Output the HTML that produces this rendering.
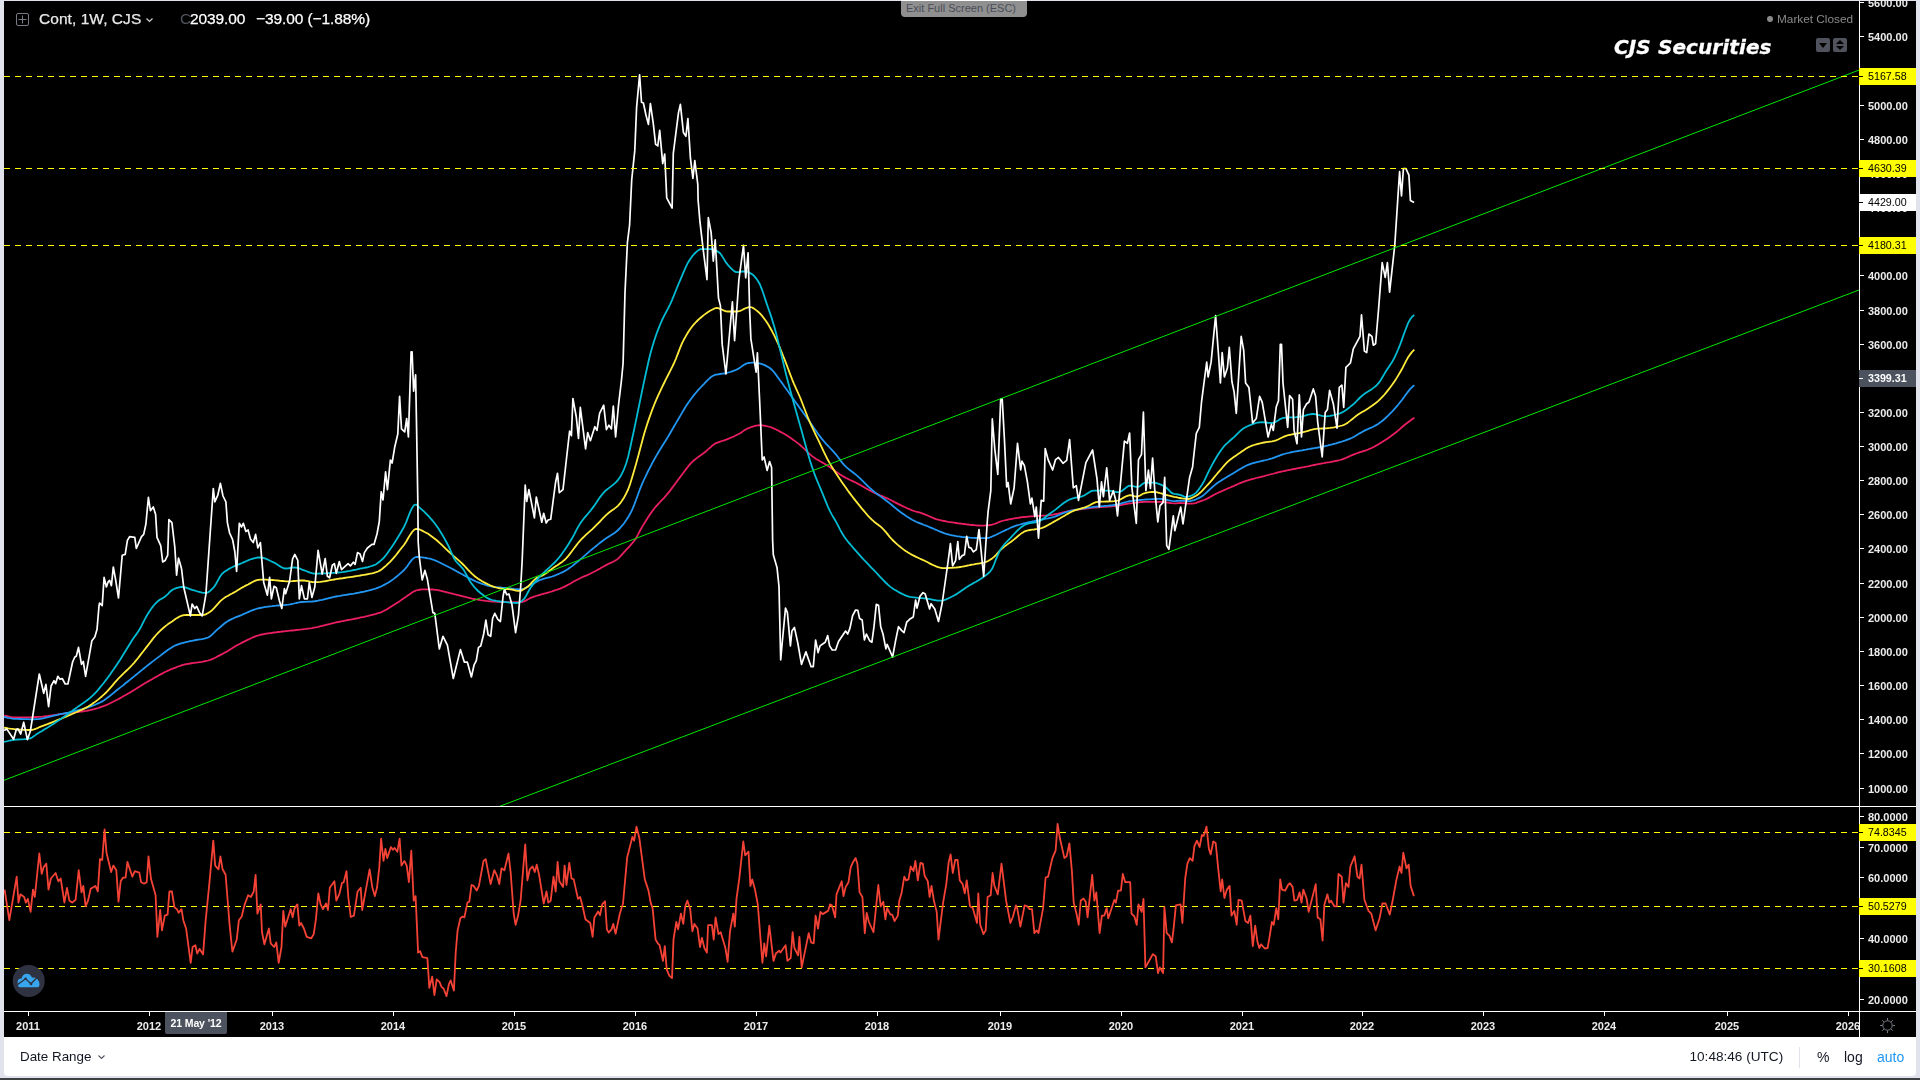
<!DOCTYPE html>
<html><head><meta charset="utf-8"><title>CJS Securities</title>
<style>
html,body{margin:0;padding:0}
body{width:1920px;height:1080px;background:#e0e3eb;position:relative;overflow:hidden;font-family:"Liberation Sans",sans-serif}
#chart{position:absolute;left:4px;top:1px;width:1912px;height:1036px;background:#000}
#bottom{position:absolute;left:4px;top:1037px;width:1912px;height:39px;background:#fff;border-radius:0 0 4px 4px}
#darkbar{position:absolute;left:0;top:1078px;width:1920px;height:2px;background:#3f4042}
svg{position:absolute;left:0;top:0}
.pl{position:absolute;left:1868px;width:48px;height:12px;line-height:12px;font-size:11px;font-weight:bold;color:#ececec;white-space:nowrap}
.tag{position:absolute;left:1859px;width:57px;height:17px;line-height:17px;font-size:10.7px;color:#000;white-space:nowrap}
.tag span{position:absolute;left:9px;top:0}
.tl{position:absolute;top:1020px;width:60px;margin-left:-30px;text-align:center;height:13px;line-height:13px;font-size:11px;font-weight:bold;color:#ececec;white-space:nowrap}
.t{position:absolute;white-space:nowrap}
</style></head><body>
<div id="chart"></div>
<div id="bottom"></div>
<div id="darkbar"></div>

<svg width="1920" height="1080" viewBox="0 0 1920 1080">
<defs><clipPath id="cm"><rect x="4" y="1" width="1855" height="805"/></clipPath><clipPath id="cr"><rect x="4" y="807" width="1855" height="204"/></clipPath></defs>
<g clip-path="url(#cm)" fill="none" stroke-linejoin="round" stroke-linecap="butt">
<polyline points="4.1,715.6 6.1,716.0 8.1,716.4 10.1,716.8 12.1,717.1 14.1,717.3 16.1,717.5 18.1,717.5 20.1,717.5 22.1,717.5 24.1,717.4 26.1,717.4 28.1,717.3 30.1,717.3 32.1,717.2 34.1,717.1 36.1,717.0 38.1,716.9 40.1,716.8 42.1,716.7 44.1,716.5 46.1,716.2 48.1,716.0 50.1,715.7 52.1,715.4 54.1,715.1 56.1,714.8 58.1,714.5 60.1,714.2 62.1,713.9 64.1,713.6 66.1,713.4 68.1,713.1 70.1,712.9 72.1,712.7 74.1,712.4 76.1,712.2 78.1,712.0 80.1,711.7 82.1,711.5 84.1,711.2 86.1,710.9 88.1,710.5 90.1,710.2 92.1,709.7 94.1,709.2 96.1,708.6 98.1,708.0 100.1,707.3 102.1,706.6 104.1,705.9 106.1,705.1 108.1,704.2 110.1,703.3 112.1,702.3 114.1,701.3 116.1,700.2 118.1,699.2 120.1,698.1 122.1,697.0 124.1,695.8 126.1,694.7 128.1,693.6 130.1,692.4 132.1,691.2 134.1,690.0 136.1,688.8 138.1,687.5 140.1,686.3 142.1,685.0 144.1,683.8 146.1,682.6 148.1,681.4 150.1,680.3 152.1,679.2 154.1,678.0 156.1,676.9 158.1,675.7 160.1,674.6 162.1,673.6 164.1,672.5 166.1,671.5 168.1,670.6 170.1,669.7 172.1,668.9 174.1,668.1 176.1,667.3 178.1,666.5 180.1,665.9 182.1,665.2 184.1,664.7 186.1,664.2 188.1,663.8 190.1,663.5 192.1,663.2 194.1,662.9 196.1,662.6 198.1,662.4 200.1,662.1 202.1,661.8 204.1,661.4 206.1,661.0 208.1,660.5 210.1,659.9 212.1,659.1 214.1,658.2 216.1,657.2 218.1,656.1 220.1,655.1 222.1,654.1 224.1,653.0 226.1,651.9 228.1,650.7 230.1,649.4 232.1,648.2 234.1,647.0 236.1,645.8 238.1,644.7 240.1,643.7 242.1,642.6 244.1,641.6 246.1,640.6 248.1,639.6 250.1,638.7 252.1,637.8 254.1,636.9 256.1,636.2 258.1,635.5 260.1,634.9 262.1,634.5 264.1,634.1 266.1,633.7 268.1,633.4 270.1,633.1 272.1,632.8 274.1,632.5 276.1,632.3 278.1,632.0 280.1,631.8 282.1,631.5 284.1,631.3 286.1,631.1 288.1,630.9 290.1,630.7 292.1,630.5 294.1,630.3 296.1,630.0 298.1,629.8 300.1,629.6 302.1,629.4 304.1,629.1 306.1,628.9 308.1,628.6 310.1,628.4 312.1,628.1 314.1,627.7 316.1,627.3 318.1,626.9 320.1,626.4 322.1,625.9 324.1,625.4 326.1,624.9 328.1,624.4 330.1,623.9 332.1,623.3 334.1,622.9 336.1,622.4 338.1,622.0 340.1,621.6 342.1,621.2 344.1,620.8 346.1,620.4 348.1,620.0 350.1,619.7 352.1,619.3 354.1,618.9 356.1,618.5 358.1,618.1 360.1,617.6 362.1,617.2 364.1,616.8 366.1,616.3 368.1,615.9 370.1,615.4 372.1,614.9 374.1,614.4 376.1,613.9 378.1,613.2 380.1,612.6 382.1,611.8 384.1,610.8 386.1,609.7 388.1,608.6 390.1,607.3 392.1,606.1 394.1,604.8 396.1,603.6 398.1,602.2 400.1,600.9 402.1,599.4 404.1,598.0 406.1,596.7 408.1,595.3 410.1,593.9 412.1,592.5 414.1,591.3 416.1,590.5 418.1,590.0 420.1,589.6 422.1,589.3 424.1,589.3 426.1,589.3 428.1,589.4 430.1,589.5 432.1,589.5 434.1,589.7 436.1,589.9 438.1,590.2 440.1,590.6 442.1,591.1 444.1,591.6 446.1,592.1 448.1,592.6 450.1,593.1 452.1,593.5 454.1,594.1 456.1,594.6 458.1,595.1 460.1,595.6 462.1,596.1 464.1,596.6 466.1,597.1 468.1,597.6 470.1,598.1 472.1,598.6 474.1,599.0 476.1,599.4 478.1,599.7 480.1,600.1 482.1,600.4 484.1,600.6 486.1,600.9 488.1,601.1 490.1,601.3 492.1,601.5 494.1,601.6 496.1,601.7 498.1,601.9 500.1,602.0 502.1,602.1 504.1,602.2 506.1,602.2 508.1,602.2 510.1,602.2 512.1,602.2 514.1,602.2 516.1,602.2 518.1,602.2 520.1,602.2 522.1,602.0 524.1,601.4 526.1,600.4 528.1,599.3 530.1,598.2 532.1,597.4 534.1,596.7 536.1,596.0 538.1,595.4 540.1,594.8 542.1,594.2 544.1,593.7 546.1,593.2 548.1,592.6 550.1,592.0 552.1,591.4 554.1,590.7 556.1,590.0 558.1,589.3 560.1,588.6 562.1,587.8 564.1,586.9 566.1,585.9 568.1,584.8 570.1,583.7 572.1,582.5 574.1,581.3 576.1,580.2 578.1,579.2 580.1,578.2 582.1,577.3 584.1,576.4 586.1,575.6 588.1,574.7 590.1,573.8 592.1,572.8 594.1,571.8 596.1,570.8 598.1,569.6 600.1,568.5 602.1,567.3 604.1,566.2 606.1,565.1 608.1,564.0 610.1,563.1 612.1,562.2 614.1,561.3 616.1,560.1 618.1,558.6 620.1,556.6 622.1,554.4 624.1,552.1 626.1,549.9 628.1,547.8 630.1,545.7 632.1,543.4 634.1,541.0 636.1,538.0 638.1,534.4 640.1,530.5 642.1,526.9 644.1,523.6 646.1,520.4 648.1,517.3 650.1,514.3 652.1,511.4 654.1,508.8 656.1,506.3 658.1,504.1 660.1,502.0 662.1,499.9 664.1,497.8 666.1,495.5 668.1,493.1 670.1,490.6 672.1,487.9 674.1,485.2 676.1,482.5 678.1,479.7 680.1,477.1 682.1,474.5 684.1,471.8 686.1,469.1 688.1,466.5 690.1,464.1 692.1,462.0 694.1,460.2 696.1,458.6 698.1,457.1 700.1,455.7 702.1,454.3 704.1,452.8 706.1,451.2 708.1,449.4 710.1,447.6 712.1,445.8 714.1,444.3 716.1,443.1 718.1,442.3 720.1,441.6 722.1,441.0 724.1,440.4 726.1,439.7 728.1,438.9 730.1,438.0 732.1,437.2 734.1,436.3 736.1,435.3 738.1,434.3 740.1,433.2 742.1,431.9 744.1,430.4 746.1,429.2 748.1,428.3 750.1,427.5 752.1,426.8 754.1,426.1 756.1,425.6 758.1,425.3 760.1,425.2 762.1,425.3 764.1,425.6 766.1,426.0 768.1,426.5 770.1,427.0 772.1,427.7 774.1,428.6 776.1,429.5 778.1,430.5 780.1,431.6 782.1,432.7 784.1,433.8 786.1,435.0 788.1,436.3 790.1,437.6 792.1,439.0 794.1,440.4 796.1,441.9 798.1,443.4 800.1,445.0 802.1,446.8 804.1,448.7 806.1,450.6 808.1,452.6 810.1,454.4 812.1,456.1 814.1,457.6 816.1,458.9 818.1,460.1 820.1,461.3 822.1,462.4 824.1,463.5 826.1,464.7 828.1,465.9 830.1,467.2 832.1,468.7 834.1,470.1 836.1,471.6 838.1,473.1 840.1,474.5 842.1,475.8 844.1,476.9 846.1,478.0 848.1,479.0 850.1,480.0 852.1,480.9 854.1,481.9 856.1,482.8 858.1,483.9 860.1,484.9 862.1,486.1 864.1,487.2 866.1,488.4 868.1,489.5 870.1,490.6 872.1,491.7 874.1,492.6 876.1,493.5 878.1,494.4 880.1,495.3 882.1,496.1 884.1,497.0 886.1,497.9 888.1,498.8 890.1,499.8 892.1,500.8 894.1,501.9 896.1,502.9 898.1,503.9 900.1,504.9 902.1,505.9 904.1,506.8 906.1,507.7 908.1,508.7 910.1,509.5 912.1,510.3 914.1,511.0 916.1,511.6 918.1,512.1 920.1,512.6 922.1,513.3 924.1,514.1 926.1,514.9 928.1,515.8 930.1,516.7 932.1,517.5 934.1,518.3 936.1,519.1 938.1,519.7 940.1,520.2 942.1,520.6 944.1,521.0 946.1,521.4 948.1,521.8 950.1,522.1 952.1,522.4 954.1,522.7 956.1,523.0 958.1,523.3 960.1,523.5 962.1,523.8 964.1,524.0 966.1,524.3 968.1,524.5 970.1,524.8 972.1,525.0 974.1,525.2 976.1,525.4 978.1,525.5 980.1,525.6 982.1,525.6 984.1,525.6 986.1,525.4 988.1,525.3 990.1,525.0 992.1,524.6 994.1,524.0 996.1,523.3 998.1,522.5 1000.1,521.7 1002.1,521.0 1004.1,520.5 1006.1,520.0 1008.1,519.6 1010.1,519.2 1012.1,518.8 1014.1,518.4 1016.1,518.1 1018.1,517.8 1020.1,517.5 1022.1,517.2 1024.1,517.0 1026.1,516.8 1028.1,516.6 1030.1,516.4 1032.1,516.3 1034.1,516.2 1036.1,516.1 1038.1,515.9 1040.1,515.8 1042.1,515.7 1044.1,515.6 1046.1,515.5 1048.1,515.3 1050.1,515.1 1052.1,514.8 1054.1,514.4 1056.1,514.0 1058.1,513.6 1060.1,513.1 1062.1,512.6 1064.1,512.1 1066.1,511.7 1068.1,511.2 1070.1,510.9 1072.1,510.5 1074.1,510.2 1076.1,509.9 1078.1,509.7 1080.1,509.4 1082.1,509.1 1084.1,508.9 1086.1,508.6 1088.1,508.4 1090.1,508.1 1092.1,507.9 1094.1,507.7 1096.1,507.5 1098.1,507.4 1100.1,507.2 1102.1,507.1 1104.1,506.9 1106.1,506.8 1108.1,506.6 1110.1,506.5 1112.1,506.3 1114.1,506.1 1116.1,505.8 1118.1,505.5 1120.1,505.2 1122.1,504.8 1124.1,504.4 1126.1,504.0 1128.1,503.6 1130.1,503.3 1132.1,503.1 1134.1,502.8 1136.1,502.6 1138.1,502.3 1140.1,502.1 1142.1,502.0 1144.1,501.9 1146.1,501.9 1148.1,501.9 1150.1,501.9 1152.1,501.9 1154.1,501.9 1156.1,501.9 1158.1,501.9 1160.1,501.9 1162.1,502.0 1164.1,502.2 1166.1,502.4 1168.1,502.7 1170.1,503.0 1172.1,503.2 1174.1,503.3 1176.1,503.3 1178.1,503.1 1180.1,503.0 1182.1,503.1 1184.1,503.2 1186.1,503.4 1188.1,503.6 1190.1,503.7 1192.1,503.6 1194.1,503.3 1196.1,502.8 1198.1,502.1 1200.1,501.4 1202.1,500.7 1204.1,500.0 1206.1,499.1 1208.1,498.1 1210.1,497.0 1212.1,495.9 1214.1,494.8 1216.1,493.7 1218.1,492.8 1220.1,491.9 1222.1,491.0 1224.1,490.1 1226.1,489.2 1228.1,488.3 1230.1,487.5 1232.1,486.6 1234.1,485.8 1236.1,484.9 1238.1,484.0 1240.1,483.2 1242.1,482.4 1244.1,481.6 1246.1,480.9 1248.1,480.3 1250.1,479.7 1252.1,479.1 1254.1,478.6 1256.1,478.0 1258.1,477.5 1260.1,477.1 1262.1,476.6 1264.1,476.1 1266.1,475.5 1268.1,475.0 1270.1,474.5 1272.1,474.0 1274.1,473.5 1276.1,472.9 1278.1,472.4 1280.1,471.9 1282.1,471.5 1284.1,471.0 1286.1,470.6 1288.1,470.2 1290.1,469.8 1292.1,469.4 1294.1,469.0 1296.1,468.6 1298.1,468.2 1300.1,467.8 1302.1,467.4 1304.1,467.1 1306.1,466.7 1308.1,466.3 1310.1,465.8 1312.1,465.4 1314.1,465.0 1316.1,464.6 1318.1,464.2 1320.1,463.8 1322.1,463.4 1324.1,463.1 1326.1,462.7 1328.1,462.4 1330.1,462.1 1332.1,461.7 1334.1,461.3 1336.1,460.9 1338.1,460.5 1340.1,460.0 1342.1,459.4 1344.1,458.6 1346.1,457.8 1348.1,456.9 1350.1,456.0 1352.1,455.1 1354.1,454.3 1356.1,453.5 1358.1,452.9 1360.1,452.2 1362.1,451.6 1364.1,450.9 1366.1,450.3 1368.1,449.5 1370.1,448.7 1372.1,447.8 1374.1,446.7 1376.1,445.6 1378.1,444.5 1380.1,443.3 1382.1,442.1 1384.1,440.8 1386.1,439.5 1388.1,438.2 1390.1,436.8 1392.1,435.3 1394.1,433.8 1396.1,432.3 1398.1,430.6 1400.1,428.8 1402.1,427.0 1404.1,425.3 1406.1,423.7 1408.1,422.2 1410.1,420.7 1412.1,419.3 1414.1,418.0 1414.4,417.8" stroke="#e91e63" stroke-width="1.8"/>
<polyline points="4.1,717.0 6.1,717.4 8.1,717.9 10.1,718.2 12.1,718.6 14.1,718.8 16.1,718.9 18.1,718.9 20.1,719.0 22.1,719.1 24.1,719.2 26.1,719.2 28.1,719.2 30.1,719.3 32.1,719.3 34.1,719.3 36.1,719.2 38.1,719.1 40.1,718.8 42.1,718.5 44.1,718.1 46.1,717.6 48.1,717.2 50.1,716.7 52.1,716.1 54.1,715.6 56.1,715.1 58.1,714.7 60.1,714.2 62.1,713.8 64.1,713.4 66.1,713.0 68.1,712.6 70.1,712.1 72.1,711.7 74.1,711.2 76.1,710.7 78.1,710.2 80.1,709.7 82.1,709.2 84.1,708.6 86.1,708.0 88.1,707.3 90.1,706.6 92.1,705.9 94.1,705.2 96.1,704.3 98.1,703.4 100.1,702.5 102.1,701.4 104.1,700.2 106.1,698.8 108.1,697.3 110.1,695.8 112.1,694.1 114.1,692.5 116.1,690.8 118.1,689.2 120.1,687.6 122.1,686.1 124.1,684.5 126.1,682.8 128.1,681.2 130.1,679.6 132.1,678.0 134.1,676.4 136.1,674.7 138.1,673.1 140.1,671.5 142.1,669.9 144.1,668.2 146.1,666.6 148.1,665.0 150.1,663.5 152.1,661.9 154.1,660.4 156.1,658.9 158.1,657.4 160.1,655.9 162.1,654.3 164.1,652.8 166.1,651.3 168.1,649.8 170.1,648.4 172.1,647.2 174.1,646.0 176.1,645.1 178.1,644.3 180.1,643.6 182.1,643.1 184.1,642.6 186.1,642.1 188.1,641.7 190.1,641.2 192.1,640.8 194.1,640.4 196.1,640.0 198.1,639.7 200.1,639.4 202.1,639.1 204.1,638.7 206.1,638.2 208.1,637.5 210.1,636.3 212.1,634.6 214.1,632.7 216.1,630.7 218.1,628.9 220.1,627.2 222.1,625.5 224.1,623.8 226.1,622.2 228.1,620.9 230.1,619.9 232.1,618.9 234.1,618.0 236.1,617.2 238.1,616.4 240.1,615.6 242.1,614.8 244.1,613.9 246.1,613.0 248.1,612.1 250.1,611.2 252.1,610.4 254.1,609.6 256.1,609.0 258.1,608.4 260.1,608.0 262.1,607.6 264.1,607.2 266.1,606.9 268.1,606.6 270.1,606.3 272.1,606.1 274.1,605.8 276.1,605.7 278.1,605.5 280.1,605.4 282.1,605.3 284.1,605.1 286.1,604.9 288.1,604.7 290.1,604.4 292.1,604.0 294.1,603.5 296.1,603.0 298.1,602.6 300.1,602.2 302.1,602.0 304.1,601.9 306.1,601.8 308.1,601.7 310.1,601.6 312.1,601.5 314.1,601.3 316.1,601.0 318.1,600.7 320.1,600.2 322.1,599.8 324.1,599.3 326.1,598.8 328.1,598.3 330.1,597.8 332.1,597.3 334.1,596.9 336.1,596.5 338.1,596.1 340.1,595.8 342.1,595.4 344.1,595.1 346.1,594.8 348.1,594.5 350.1,594.2 352.1,593.9 354.1,593.6 356.1,593.2 358.1,592.8 360.1,592.4 362.1,592.0 364.1,591.6 366.1,591.1 368.1,590.7 370.1,590.2 372.1,589.6 374.1,589.0 376.1,588.4 378.1,587.7 380.1,586.9 382.1,586.0 384.1,584.9 386.1,583.8 388.1,582.7 390.1,581.4 392.1,580.1 394.1,578.6 396.1,577.0 398.1,575.4 400.1,573.6 402.1,571.9 404.1,570.0 406.1,567.7 408.1,564.9 410.1,562.1 412.1,559.6 414.1,557.8 416.1,557.0 418.1,557.0 420.1,557.2 422.1,557.4 424.1,557.7 426.1,558.0 428.1,558.4 430.1,558.7 432.1,559.3 434.1,560.0 436.1,560.8 438.1,561.7 440.1,562.7 442.1,563.7 444.1,564.7 446.1,565.7 448.1,566.7 450.1,567.7 452.1,568.8 454.1,569.9 456.1,571.0 458.1,572.1 460.1,573.2 462.1,574.3 464.1,575.4 466.1,576.5 468.1,577.5 470.1,578.6 472.1,579.6 474.1,580.6 476.1,581.5 478.1,582.3 480.1,583.1 482.1,583.8 484.1,584.5 486.1,585.2 488.1,585.8 490.1,586.2 492.1,586.6 494.1,586.9 496.1,587.1 498.1,587.3 500.1,587.5 502.1,587.7 504.1,587.8 506.1,588.0 508.1,588.2 510.1,588.4 512.1,588.6 514.1,588.9 516.1,589.1 518.1,589.2 520.1,589.3 522.1,589.2 524.1,588.5 526.1,587.6 528.1,586.4 530.1,585.3 532.1,584.3 534.1,583.2 536.1,582.0 538.1,580.9 540.1,580.0 542.1,579.3 544.1,578.7 546.1,578.1 548.1,577.6 550.1,577.1 552.1,576.5 554.1,575.8 556.1,575.0 558.1,574.2 560.1,573.3 562.1,572.4 564.1,571.4 566.1,570.3 568.1,569.0 570.1,567.6 572.1,566.1 574.1,564.5 576.1,562.9 578.1,561.3 580.1,559.6 582.1,557.9 584.1,556.1 586.1,554.4 588.1,552.6 590.1,550.9 592.1,549.3 594.1,547.6 596.1,546.0 598.1,544.4 600.1,542.8 602.1,541.2 604.1,539.7 606.1,538.3 608.1,537.0 610.1,535.8 612.1,534.5 614.1,533.2 616.1,531.7 618.1,530.0 620.1,528.0 622.1,525.7 624.1,523.2 626.1,520.3 628.1,517.2 630.1,513.8 632.1,509.9 634.1,505.1 636.1,499.7 638.1,494.2 640.1,488.8 642.1,483.9 644.1,479.5 646.1,475.3 648.1,471.2 650.1,467.3 652.1,463.4 654.1,459.7 656.1,456.1 658.1,452.7 660.1,449.4 662.1,446.3 664.1,443.1 666.1,439.9 668.1,436.6 670.1,433.2 672.1,429.8 674.1,426.3 676.1,422.9 678.1,419.5 680.1,416.1 682.1,412.6 684.1,409.2 686.1,406.0 688.1,403.0 690.1,400.2 692.1,397.5 694.1,394.9 696.1,392.5 698.1,390.2 700.1,388.0 702.1,385.9 704.1,383.8 706.1,381.6 708.1,379.6 710.1,377.8 712.1,376.3 714.1,375.2 716.1,374.7 718.1,374.3 720.1,374.0 722.1,373.7 724.1,373.5 726.1,373.1 728.1,372.5 730.1,372.0 732.1,371.3 734.1,370.6 736.1,369.8 738.1,368.9 740.1,367.6 742.1,366.1 744.1,364.7 746.1,363.6 748.1,363.0 750.1,362.8 752.1,362.6 754.1,362.6 756.1,362.8 758.1,363.2 760.1,363.6 762.1,364.2 764.1,364.9 766.1,365.9 768.1,367.0 770.1,368.3 772.1,370.0 774.1,372.2 776.1,374.9 778.1,377.7 780.1,380.5 782.1,383.1 784.1,385.9 786.1,388.7 788.1,391.6 790.1,394.5 792.1,397.3 794.1,400.1 796.1,402.9 798.1,405.6 800.1,408.4 802.1,411.1 804.1,413.9 806.1,416.7 808.1,419.5 810.1,422.3 812.1,425.3 814.1,428.2 816.1,431.1 818.1,433.9 820.1,436.6 822.1,439.2 824.1,441.5 826.1,443.8 828.1,445.9 830.1,448.0 832.1,450.1 834.1,452.3 836.1,454.6 838.1,457.2 840.1,459.9 842.1,462.6 844.1,464.9 846.1,466.8 848.1,468.6 850.1,470.2 852.1,471.7 854.1,473.3 856.1,474.9 858.1,476.6 860.1,478.4 862.1,480.4 864.1,482.3 866.1,484.3 868.1,486.3 870.1,488.2 872.1,490.0 874.1,491.6 876.1,493.2 878.1,494.7 880.1,496.1 882.1,497.6 884.1,499.0 886.1,500.5 888.1,502.0 890.1,503.6 892.1,505.3 894.1,507.0 896.1,508.6 898.1,510.2 900.1,511.8 902.1,513.2 904.1,514.6 906.1,516.0 908.1,517.3 910.1,518.5 912.1,519.7 914.1,520.7 916.1,521.7 918.1,522.6 920.1,523.4 922.1,524.2 924.1,525.0 926.1,525.7 928.1,526.5 930.1,527.3 932.1,528.1 934.1,529.0 936.1,529.8 938.1,530.7 940.1,531.6 942.1,532.4 944.1,533.2 946.1,533.9 948.1,534.4 950.1,534.9 952.1,535.3 954.1,535.7 956.1,536.1 958.1,536.4 960.1,536.7 962.1,537.0 964.1,537.2 966.1,537.4 968.1,537.5 970.1,537.7 972.1,537.8 974.1,537.9 976.1,538.0 978.1,538.0 980.1,538.1 982.1,538.1 984.1,538.2 986.1,538.2 988.1,538.0 990.1,537.4 992.1,536.5 994.1,535.6 996.1,534.7 998.1,533.7 1000.1,532.8 1002.1,531.8 1004.1,530.9 1006.1,529.9 1008.1,529.0 1010.1,528.0 1012.1,527.2 1014.1,526.4 1016.1,525.7 1018.1,525.0 1020.1,524.5 1022.1,523.9 1024.1,523.4 1026.1,522.9 1028.1,522.4 1030.1,522.0 1032.1,521.5 1034.1,521.1 1036.1,520.6 1038.1,520.2 1040.1,519.9 1042.1,519.5 1044.1,519.1 1046.1,518.7 1048.1,518.3 1050.1,517.8 1052.1,517.3 1054.1,516.8 1056.1,516.1 1058.1,515.3 1060.1,514.5 1062.1,513.7 1064.1,512.9 1066.1,512.2 1068.1,511.5 1070.1,510.9 1072.1,510.5 1074.1,510.0 1076.1,509.6 1078.1,509.3 1080.1,508.9 1082.1,508.6 1084.1,508.3 1086.1,508.0 1088.1,507.7 1090.1,507.4 1092.1,507.2 1094.1,506.9 1096.1,506.7 1098.1,506.5 1100.1,506.3 1102.1,506.1 1104.1,506.0 1106.1,505.8 1108.1,505.7 1110.1,505.5 1112.1,505.3 1114.1,505.0 1116.1,504.7 1118.1,504.3 1120.1,503.8 1122.1,503.2 1124.1,502.6 1126.1,502.0 1128.1,501.5 1130.1,501.1 1132.1,500.9 1134.1,500.6 1136.1,500.4 1138.1,500.2 1140.1,500.0 1142.1,499.8 1144.1,499.7 1146.1,499.5 1148.1,499.4 1150.1,499.3 1152.1,499.2 1154.1,499.1 1156.1,499.0 1158.1,498.9 1160.1,498.9 1162.1,499.0 1164.1,499.3 1166.1,499.7 1168.1,500.2 1170.1,500.6 1172.1,500.9 1174.1,501.1 1176.1,501.0 1178.1,500.8 1180.1,500.7 1182.1,500.8 1184.1,500.9 1186.1,501.1 1188.1,501.2 1190.1,501.1 1192.1,500.7 1194.1,500.1 1196.1,499.3 1198.1,498.4 1200.1,497.4 1202.1,496.2 1204.1,494.6 1206.1,492.9 1208.1,491.0 1210.1,489.1 1212.1,487.3 1214.1,485.6 1216.1,484.0 1218.1,482.6 1220.1,481.3 1222.1,480.0 1224.1,478.7 1226.1,477.5 1228.1,476.2 1230.1,475.1 1232.1,473.9 1234.1,472.7 1236.1,471.5 1238.1,470.3 1240.1,469.1 1242.1,467.9 1244.1,466.8 1246.1,465.8 1248.1,464.9 1250.1,464.1 1252.1,463.4 1254.1,462.8 1256.1,462.3 1258.1,461.8 1260.1,461.4 1262.1,460.9 1264.1,460.5 1266.1,460.0 1268.1,459.5 1270.1,458.9 1272.1,458.3 1274.1,457.6 1276.1,456.8 1278.1,456.1 1280.1,455.4 1282.1,454.7 1284.1,454.0 1286.1,453.5 1288.1,453.0 1290.1,452.5 1292.1,452.1 1294.1,451.7 1296.1,451.3 1298.1,451.0 1300.1,450.6 1302.1,450.3 1304.1,449.9 1306.1,449.6 1308.1,449.2 1310.1,448.9 1312.1,448.5 1314.1,448.2 1316.1,447.8 1318.1,447.5 1320.1,447.1 1322.1,446.7 1324.1,446.3 1326.1,445.8 1328.1,445.4 1330.1,444.9 1332.1,444.4 1334.1,443.8 1336.1,443.3 1338.1,442.7 1340.1,442.1 1342.1,441.5 1344.1,440.8 1346.1,440.2 1348.1,439.4 1350.1,438.6 1352.1,437.7 1354.1,436.7 1356.1,435.5 1358.1,434.3 1360.1,433.1 1362.1,432.0 1364.1,430.9 1366.1,429.9 1368.1,429.0 1370.1,428.1 1372.1,427.2 1374.1,426.2 1376.1,425.1 1378.1,424.0 1380.1,422.6 1382.1,421.0 1384.1,419.3 1386.1,417.5 1388.1,415.6 1390.1,413.6 1392.1,411.6 1394.1,409.4 1396.1,407.1 1398.1,404.8 1400.1,402.3 1402.1,399.8 1404.1,397.1 1406.1,394.2 1408.1,391.6 1410.1,389.2 1412.1,387.1 1414.1,385.3 1414.3,385.1" stroke="#2196f3" stroke-width="1.8"/>
<polyline points="4.1,727.7 6.1,728.0 8.1,728.4 10.1,728.7 12.1,728.9 14.1,729.1 16.1,729.3 18.1,729.5 20.1,729.6 22.1,729.7 24.1,729.9 26.1,729.9 28.1,730.0 30.1,730.0 32.1,729.8 34.1,729.3 36.1,728.6 38.1,727.8 40.1,726.9 42.1,726.1 44.1,725.3 46.1,724.6 48.1,723.9 50.1,723.1 52.1,722.3 54.1,721.5 56.1,720.7 58.1,719.9 60.1,719.1 62.1,718.3 64.1,717.4 66.1,716.6 68.1,715.7 70.1,714.9 72.1,714.0 74.1,713.2 76.1,712.3 78.1,711.4 80.1,710.5 82.1,709.6 84.1,708.6 86.1,707.6 88.1,706.5 90.1,705.3 92.1,704.0 94.1,702.6 96.1,701.1 98.1,699.6 100.1,697.9 102.1,696.2 104.1,694.4 106.1,692.5 108.1,690.3 110.1,688.1 112.1,685.8 114.1,683.4 116.1,681.1 118.1,678.9 120.1,676.9 122.1,674.9 124.1,672.9 126.1,671.0 128.1,669.1 130.1,667.1 132.1,665.0 134.1,662.8 136.1,660.4 138.1,658.0 140.1,655.4 142.1,652.8 144.1,650.2 146.1,647.6 148.1,645.1 150.1,642.5 152.1,639.9 154.1,637.3 156.1,635.0 158.1,632.9 160.1,630.9 162.1,629.0 164.1,627.3 166.1,625.6 168.1,624.1 170.1,622.7 172.1,621.4 174.1,620.0 176.1,618.6 178.1,617.4 180.1,616.3 182.1,615.5 184.1,615.1 186.1,615.0 188.1,615.0 190.1,615.0 192.1,615.0 194.1,615.0 196.1,615.0 198.1,615.0 200.1,615.0 202.1,615.0 204.1,614.9 206.1,614.1 208.1,613.0 210.1,611.7 212.1,610.2 214.1,608.2 216.1,605.9 218.1,603.6 220.1,601.4 222.1,599.6 224.1,598.1 226.1,596.8 228.1,595.7 230.1,594.5 232.1,593.5 234.1,592.4 236.1,591.2 238.1,590.0 240.1,588.8 242.1,587.6 244.1,586.5 246.1,585.4 248.1,584.5 250.1,583.4 252.1,582.3 254.1,581.2 256.1,580.4 258.1,579.8 260.1,579.6 262.1,579.6 264.1,579.7 266.1,579.7 268.1,579.8 270.1,579.9 272.1,580.0 274.1,580.1 276.1,580.3 278.1,580.5 280.1,580.8 282.1,581.0 284.1,581.2 286.1,581.4 288.1,581.4 290.1,581.3 292.1,581.2 294.1,581.0 296.1,580.8 298.1,580.6 300.1,580.5 302.1,580.4 304.1,580.5 306.1,580.8 308.1,581.2 310.1,581.6 312.1,582.0 314.1,582.2 316.1,582.2 318.1,582.1 320.1,581.9 322.1,581.6 324.1,581.3 326.1,581.0 328.1,580.6 330.1,580.2 332.1,579.8 334.1,579.5 336.1,579.1 338.1,578.8 340.1,578.5 342.1,578.3 344.1,578.0 346.1,577.7 348.1,577.4 350.1,577.1 352.1,576.8 354.1,576.5 356.1,576.1 358.1,575.8 360.1,575.5 362.1,575.1 364.1,574.8 366.1,574.5 368.1,574.1 370.1,573.7 372.1,573.3 374.1,572.8 376.1,572.2 378.1,571.5 380.1,570.4 382.1,569.0 384.1,567.3 386.1,565.6 388.1,563.7 390.1,561.9 392.1,559.7 394.1,557.4 396.1,555.0 398.1,552.4 400.1,549.8 402.1,547.2 404.1,544.7 406.1,541.7 408.1,538.3 410.1,534.9 412.1,532.0 414.1,529.8 416.1,528.9 418.1,529.1 420.1,529.7 422.1,530.6 424.1,531.7 426.1,532.7 428.1,533.8 430.1,535.2 432.1,536.7 434.1,538.2 436.1,539.8 438.1,541.5 440.1,543.3 442.1,545.2 444.1,547.2 446.1,549.1 448.1,551.0 450.1,552.8 452.1,554.6 454.1,556.4 456.1,558.1 458.1,559.9 460.1,561.7 462.1,563.5 464.1,565.5 466.1,567.6 468.1,569.8 470.1,571.9 472.1,573.9 474.1,575.7 476.1,577.3 478.1,578.7 480.1,580.0 482.1,581.3 484.1,582.4 486.1,583.4 488.1,584.4 490.1,585.3 492.1,586.1 494.1,586.9 496.1,587.5 498.1,588.0 500.1,588.4 502.1,588.6 504.1,588.8 506.1,589.0 508.1,589.2 510.1,589.4 512.1,589.6 514.1,590.1 516.1,590.6 518.1,590.9 520.1,590.9 522.1,590.3 524.1,589.1 526.1,587.8 528.1,586.4 530.1,584.4 532.1,582.2 534.1,580.1 536.1,578.4 538.1,577.3 540.1,576.5 542.1,575.7 544.1,574.5 546.1,573.2 548.1,571.8 550.1,570.3 552.1,568.8 554.1,567.3 556.1,566.0 558.1,564.7 560.1,563.3 562.1,561.9 564.1,560.3 566.1,558.4 568.1,556.1 570.1,553.6 572.1,551.0 574.1,548.3 576.1,545.6 578.1,543.0 580.1,540.7 582.1,538.5 584.1,536.6 586.1,534.7 588.1,532.9 590.1,531.1 592.1,529.3 594.1,527.4 596.1,525.4 598.1,523.4 600.1,521.3 602.1,519.2 604.1,517.1 606.1,515.1 608.1,513.3 610.1,511.7 612.1,510.3 614.1,508.9 616.1,507.4 618.1,505.6 620.1,503.4 622.1,500.6 624.1,497.4 626.1,493.7 628.1,489.5 630.1,484.1 632.1,477.6 634.1,470.7 636.1,463.7 638.1,456.6 640.1,449.0 642.1,441.4 644.1,434.1 646.1,427.5 648.1,421.4 650.1,415.6 652.1,410.1 654.1,405.0 656.1,400.1 658.1,395.6 660.1,391.3 662.1,387.1 664.1,383.0 666.1,378.9 668.1,375.0 670.1,371.1 672.1,367.2 674.1,363.0 676.1,358.3 678.1,353.1 680.1,347.9 682.1,343.2 684.1,339.2 686.1,335.6 688.1,332.2 690.1,329.2 692.1,326.5 694.1,324.1 696.1,322.0 698.1,320.0 700.1,318.2 702.1,316.5 704.1,314.9 706.1,313.4 708.1,312.0 710.1,310.7 712.1,309.7 714.1,308.7 716.1,308.0 718.1,308.2 720.1,308.8 722.1,309.7 724.1,310.6 726.1,311.3 728.1,311.5 730.1,311.5 732.1,311.5 734.1,311.5 736.1,311.5 738.1,311.4 740.1,310.9 742.1,310.0 744.1,308.9 746.1,308.0 748.1,307.3 750.1,307.0 752.1,307.5 754.1,308.6 756.1,310.1 758.1,311.7 760.1,313.6 762.1,315.9 764.1,318.5 766.1,321.3 768.1,324.3 770.1,327.7 772.1,331.3 774.1,335.2 776.1,339.3 778.1,343.7 780.1,348.4 782.1,353.3 784.1,358.3 786.1,363.4 788.1,368.7 790.1,374.1 792.1,379.3 794.1,384.1 796.1,388.6 798.1,393.0 800.1,397.5 802.1,402.5 804.1,407.7 806.1,413.0 808.1,418.1 810.1,422.8 812.1,427.2 814.1,431.4 816.1,435.6 818.1,439.7 820.1,443.9 822.1,448.1 824.1,452.3 826.1,456.4 828.1,460.3 830.1,463.9 832.1,467.2 834.1,470.4 836.1,473.5 838.1,476.5 840.1,479.4 842.1,482.4 844.1,485.3 846.1,488.1 848.1,490.9 850.1,493.6 852.1,496.3 854.1,498.9 856.1,501.4 858.1,503.9 860.1,506.4 862.1,508.8 864.1,511.1 866.1,513.5 868.1,515.8 870.1,517.9 872.1,519.9 874.1,521.7 876.1,523.2 878.1,524.7 880.1,526.2 882.1,528.0 884.1,530.1 886.1,532.4 888.1,534.9 890.1,537.3 892.1,539.5 894.1,541.5 896.1,543.3 898.1,545.1 900.1,546.8 902.1,548.4 904.1,549.9 906.1,551.3 908.1,552.6 910.1,553.8 912.1,554.9 914.1,555.9 916.1,556.9 918.1,557.8 920.1,558.7 922.1,559.6 924.1,560.5 926.1,561.5 928.1,562.5 930.1,563.6 932.1,564.6 934.1,565.5 936.1,566.4 938.1,567.1 940.1,567.7 942.1,568.0 944.1,568.1 946.1,568.1 948.1,568.0 950.1,567.9 952.1,567.8 954.1,567.6 956.1,567.5 958.1,567.3 960.1,567.0 962.1,566.7 964.1,566.3 966.1,565.9 968.1,565.5 970.1,565.0 972.1,564.6 974.1,564.3 976.1,563.9 978.1,563.6 980.1,563.3 982.1,563.0 984.1,562.5 986.1,561.9 988.1,561.0 990.1,559.8 992.1,558.4 994.1,556.9 996.1,554.9 998.1,552.5 1000.1,550.3 1002.1,548.5 1004.1,546.9 1006.1,545.4 1008.1,543.9 1010.1,542.4 1012.1,541.0 1014.1,539.4 1016.1,537.7 1018.1,536.0 1020.1,534.4 1022.1,532.9 1024.1,531.7 1026.1,530.9 1028.1,530.4 1030.1,530.0 1032.1,529.7 1034.1,529.5 1036.1,529.2 1038.1,528.9 1040.1,528.5 1042.1,527.9 1044.1,527.1 1046.1,526.1 1048.1,525.0 1050.1,523.9 1052.1,522.7 1054.1,521.6 1056.1,520.5 1058.1,519.4 1060.1,518.3 1062.1,517.1 1064.1,515.9 1066.1,514.7 1068.1,513.6 1070.1,512.5 1072.1,511.5 1074.1,510.7 1076.1,509.9 1078.1,509.3 1080.1,508.8 1082.1,508.2 1084.1,507.6 1086.1,506.9 1088.1,506.0 1090.1,505.0 1092.1,503.9 1094.1,502.9 1096.1,502.2 1098.1,501.9 1100.1,501.7 1102.1,501.6 1104.1,501.6 1106.1,501.5 1108.1,501.5 1110.1,501.4 1112.1,501.3 1114.1,501.2 1116.1,501.0 1118.1,500.5 1120.1,499.6 1122.1,498.5 1124.1,497.4 1126.1,496.3 1128.1,495.6 1130.1,495.2 1132.1,495.5 1134.1,496.2 1136.1,496.7 1138.1,496.4 1140.1,495.5 1142.1,494.3 1144.1,493.3 1146.1,492.8 1148.1,492.4 1150.1,492.1 1152.1,491.9 1154.1,492.0 1156.1,492.2 1158.1,492.6 1160.1,493.2 1162.1,493.7 1164.1,494.3 1166.1,494.9 1168.1,495.4 1170.1,495.8 1172.1,496.3 1174.1,496.8 1176.1,497.2 1178.1,497.7 1180.1,498.0 1182.1,498.4 1184.1,498.7 1186.1,498.9 1188.1,499.0 1190.1,498.6 1192.1,497.8 1194.1,496.8 1196.1,495.7 1198.1,494.4 1200.1,492.8 1202.1,490.8 1204.1,488.7 1206.1,486.5 1208.1,484.4 1210.1,482.1 1212.1,479.8 1214.1,477.4 1216.1,475.0 1218.1,472.7 1220.1,470.4 1222.1,468.0 1224.1,465.6 1226.1,463.4 1228.1,461.4 1230.1,459.7 1232.1,458.2 1234.1,456.8 1236.1,455.4 1238.1,454.1 1240.1,452.8 1242.1,451.3 1244.1,449.9 1246.1,448.6 1248.1,447.4 1250.1,446.5 1252.1,445.7 1254.1,445.0 1256.1,444.4 1258.1,443.8 1260.1,443.3 1262.1,442.9 1264.1,442.5 1266.1,442.2 1268.1,441.9 1270.1,441.6 1272.1,441.3 1274.1,440.9 1276.1,440.3 1278.1,439.5 1280.1,438.5 1282.1,437.5 1284.1,436.6 1286.1,435.8 1288.1,435.2 1290.1,434.8 1292.1,434.4 1294.1,434.0 1296.1,433.6 1298.1,433.3 1300.1,432.9 1302.1,432.5 1304.1,431.9 1306.1,431.4 1308.1,430.8 1310.1,430.2 1312.1,429.7 1314.1,429.2 1316.1,428.9 1318.1,428.7 1320.1,428.6 1322.1,428.5 1324.1,428.4 1326.1,428.3 1328.1,428.1 1330.1,427.9 1332.1,427.6 1334.1,427.3 1336.1,426.9 1338.1,426.5 1340.1,426.0 1342.1,425.5 1344.1,424.8 1346.1,423.8 1348.1,422.4 1350.1,420.9 1352.1,419.3 1354.1,417.6 1356.1,416.0 1358.1,414.6 1360.1,413.3 1362.1,412.1 1364.1,410.9 1366.1,409.7 1368.1,408.4 1370.1,407.1 1372.1,405.7 1374.1,404.2 1376.1,402.7 1378.1,401.1 1380.1,399.2 1382.1,397.2 1384.1,395.0 1386.1,392.6 1388.1,390.1 1390.1,387.5 1392.1,384.8 1394.1,381.9 1396.1,378.9 1398.1,375.6 1400.1,372.3 1402.1,368.8 1404.1,364.9 1406.1,360.9 1408.1,357.3 1410.1,354.4 1412.1,351.9 1414.1,349.9 1414.3,349.7" stroke="#ffeb3b" stroke-width="1.8"/>
<polyline points="4.1,742.0 6.1,741.5 8.1,741.0 10.1,740.5 12.1,740.2 14.1,739.9 16.1,739.7 18.1,739.5 20.1,739.4 22.1,739.3 24.1,739.2 26.1,739.0 28.1,738.7 30.1,738.4 32.1,737.5 34.1,736.1 36.1,734.6 38.1,733.3 40.1,732.1 42.1,730.9 44.1,729.6 46.1,728.4 48.1,727.2 50.1,725.9 52.1,724.7 54.1,723.4 56.1,722.1 58.1,720.8 60.1,719.5 62.1,718.1 64.1,716.7 66.1,715.3 68.1,713.9 70.1,712.4 72.1,711.0 74.1,709.5 76.1,708.1 78.1,706.6 80.1,705.2 82.1,703.8 84.1,702.4 86.1,701.0 88.1,699.5 90.1,697.9 92.1,696.1 94.1,694.2 96.1,692.1 98.1,689.8 100.1,687.4 102.1,685.0 104.1,682.5 106.1,679.9 108.1,677.2 110.1,674.5 112.1,671.6 114.1,668.7 116.1,665.8 118.1,662.8 120.1,659.8 122.1,656.6 124.1,653.3 126.1,650.0 128.1,646.7 130.1,643.5 132.1,640.3 134.1,637.3 136.1,634.6 138.1,631.8 140.1,628.6 142.1,624.7 144.1,620.6 146.1,616.8 148.1,613.6 150.1,610.5 152.1,607.6 154.1,605.0 156.1,602.8 158.1,601.0 160.1,599.6 162.1,598.4 164.1,597.2 166.1,595.7 168.1,593.8 170.1,591.7 172.1,590.0 174.1,589.0 176.1,588.2 178.1,587.6 180.1,587.2 182.1,587.0 184.1,587.2 186.1,587.7 188.1,588.4 190.1,589.2 192.1,589.9 194.1,590.4 196.1,591.0 198.1,591.6 200.1,592.1 202.1,592.6 204.1,592.9 206.1,593.0 208.1,592.3 210.1,590.9 212.1,589.0 214.1,586.9 216.1,583.8 218.1,580.1 220.1,576.5 222.1,573.8 224.1,572.1 226.1,570.7 228.1,569.4 230.1,568.3 232.1,567.3 234.1,566.3 236.1,565.4 238.1,564.6 240.1,563.8 242.1,563.0 244.1,562.1 246.1,561.2 248.1,560.3 250.1,559.5 252.1,558.8 254.1,558.3 256.1,557.9 258.1,557.5 260.1,557.4 262.1,557.6 264.1,558.1 266.1,558.9 268.1,559.8 270.1,560.8 272.1,561.7 274.1,562.6 276.1,563.8 278.1,565.1 280.1,566.4 282.1,567.5 284.1,568.3 286.1,568.5 288.1,568.3 290.1,568.0 292.1,567.7 294.1,567.5 296.1,567.6 298.1,568.0 300.1,568.7 302.1,569.6 304.1,570.3 306.1,571.0 308.1,571.8 310.1,572.6 312.1,573.2 314.1,573.6 316.1,573.6 318.1,573.6 320.1,573.5 322.1,573.5 324.1,573.4 326.1,573.3 328.1,573.2 330.1,573.1 332.1,572.9 334.1,572.8 336.1,572.7 338.1,572.5 340.1,572.3 342.1,572.1 344.1,571.8 346.1,571.5 348.1,571.1 350.1,570.8 352.1,570.4 354.1,570.0 356.1,569.6 358.1,569.1 360.1,568.7 362.1,568.3 364.1,567.9 366.1,567.5 368.1,567.1 370.1,566.5 372.1,565.9 374.1,565.2 376.1,564.2 378.1,562.8 380.1,561.2 382.1,559.4 384.1,557.4 386.1,555.0 388.1,552.2 390.1,549.3 392.1,546.4 394.1,543.4 396.1,540.3 398.1,537.0 400.1,533.7 402.1,530.2 404.1,526.7 406.1,522.3 408.1,517.2 410.1,512.2 412.1,507.9 414.1,505.1 416.1,504.5 418.1,506.3 420.1,508.1 422.1,509.9 424.1,511.7 426.1,513.6 428.1,515.6 430.1,517.8 432.1,520.1 434.1,522.5 436.1,525.2 438.1,528.1 440.1,531.2 442.1,534.5 444.1,537.9 446.1,541.5 448.1,545.2 450.1,549.5 452.1,554.2 454.1,558.5 456.1,561.5 458.1,563.7 460.1,565.6 462.1,567.8 464.1,570.6 466.1,574.1 468.1,578.0 470.1,581.5 472.1,584.3 474.1,586.8 476.1,589.0 478.1,591.0 480.1,592.7 482.1,594.3 484.1,595.8 486.1,597.2 488.1,598.4 490.1,599.4 492.1,600.0 494.1,600.5 496.1,600.9 498.1,601.2 500.1,601.5 502.1,601.7 504.1,601.9 506.1,602.1 508.1,602.3 510.1,602.6 512.1,602.8 514.1,602.9 516.1,603.0 518.1,602.9 520.1,602.0 522.1,600.7 524.1,598.9 526.1,595.8 528.1,592.0 530.1,588.5 532.1,585.8 534.1,583.2 536.1,580.8 538.1,578.4 540.1,576.2 542.1,574.2 544.1,572.3 546.1,570.5 548.1,568.7 550.1,566.9 552.1,564.9 554.1,563.0 556.1,561.0 558.1,558.7 560.1,556.2 562.1,553.6 564.1,550.8 566.1,547.8 568.1,544.8 570.1,541.6 572.1,538.3 574.1,534.6 576.1,530.6 578.1,526.9 580.1,523.6 582.1,520.8 584.1,518.2 586.1,515.8 588.1,513.5 590.1,511.2 592.1,508.6 594.1,505.9 596.1,503.0 598.1,500.0 600.1,497.1 602.1,494.5 604.1,492.2 606.1,490.2 608.1,488.6 610.1,487.1 612.1,485.6 614.1,483.9 616.1,482.1 618.1,479.8 620.1,477.0 622.1,473.4 624.1,469.0 626.1,463.8 628.1,456.9 630.1,448.2 632.1,438.8 634.1,429.7 636.1,420.1 638.1,410.3 640.1,400.6 642.1,390.9 644.1,381.4 646.1,372.2 648.1,363.2 650.1,354.8 652.1,347.4 654.1,341.0 656.1,335.0 658.1,329.6 660.1,324.6 662.1,320.0 664.1,315.9 666.1,312.1 668.1,308.4 670.1,304.3 672.1,299.8 674.1,295.0 676.1,290.0 678.1,285.0 680.1,280.3 682.1,275.6 684.1,270.8 686.1,266.3 688.1,262.4 690.1,259.3 692.1,256.4 694.1,254.0 696.1,252.1 698.1,250.4 700.1,249.2 702.1,249.1 704.1,249.1 706.1,249.1 708.1,249.1 710.1,249.1 712.1,249.2 714.1,249.7 716.1,250.6 718.1,251.7 720.1,253.3 722.1,256.1 724.1,259.4 726.1,262.7 728.1,265.1 730.1,267.3 732.1,269.4 734.1,271.1 736.1,272.1 738.1,272.1 740.1,271.9 742.1,271.5 744.1,271.3 746.1,271.5 748.1,272.1 750.1,273.1 752.1,274.2 754.1,275.9 756.1,278.3 758.1,281.3 760.1,284.8 762.1,289.8 764.1,295.8 766.1,301.9 768.1,307.7 770.1,313.4 772.1,319.4 774.1,325.9 776.1,333.3 778.1,341.4 780.1,349.8 782.1,358.0 784.1,366.3 786.1,374.5 788.1,382.2 790.1,389.7 792.1,396.9 794.1,404.2 796.1,411.3 798.1,418.4 800.1,425.4 802.1,432.6 804.1,439.9 806.1,447.3 808.1,454.3 810.1,460.9 812.1,467.1 814.1,472.9 816.1,478.2 818.1,483.0 820.1,487.7 822.1,492.4 824.1,497.3 826.1,502.3 828.1,507.1 830.1,511.4 832.1,515.1 834.1,518.5 836.1,521.9 838.1,525.6 840.1,529.6 842.1,533.3 844.1,536.4 846.1,539.2 848.1,541.8 850.1,544.2 852.1,546.5 854.1,548.8 856.1,551.1 858.1,553.4 860.1,555.6 862.1,557.8 864.1,560.0 866.1,562.1 868.1,564.2 870.1,566.3 872.1,568.4 874.1,570.4 876.1,572.5 878.1,574.6 880.1,576.8 882.1,578.9 884.1,581.0 886.1,583.0 888.1,584.9 890.1,586.6 892.1,588.1 894.1,589.4 896.1,590.6 898.1,591.8 900.1,592.9 902.1,593.9 904.1,594.8 906.1,595.6 908.1,596.3 910.1,596.8 912.1,597.2 914.1,597.4 916.1,597.6 918.1,597.8 920.1,598.0 922.1,598.1 924.1,598.3 926.1,598.5 928.1,598.8 930.1,599.2 932.1,599.6 934.1,600.0 936.1,600.3 938.1,600.6 940.1,600.7 942.1,600.6 944.1,600.2 946.1,599.4 948.1,598.5 950.1,597.5 952.1,596.5 954.1,595.5 956.1,594.4 958.1,593.1 960.1,591.7 962.1,590.3 964.1,588.9 966.1,587.5 968.1,586.3 970.1,585.1 972.1,583.9 974.1,582.8 976.1,581.7 978.1,580.5 980.1,579.2 982.1,577.9 984.1,576.5 986.1,575.1 988.1,573.5 990.1,571.6 992.1,568.8 994.1,564.3 996.1,559.1 998.1,554.4 1000.1,550.2 1002.1,547.3 1004.1,544.7 1006.1,542.5 1008.1,540.4 1010.1,538.3 1012.1,536.2 1014.1,534.0 1016.1,531.9 1018.1,529.9 1020.1,528.1 1022.1,526.5 1024.1,525.2 1026.1,524.2 1028.1,523.6 1030.1,523.2 1032.1,522.9 1034.1,522.6 1036.1,522.1 1038.1,521.5 1040.1,520.6 1042.1,519.4 1044.1,518.0 1046.1,516.5 1048.1,515.0 1050.1,513.5 1052.1,512.1 1054.1,510.6 1056.1,509.1 1058.1,507.5 1060.1,505.9 1062.1,504.3 1064.1,502.8 1066.1,501.4 1068.1,500.2 1070.1,499.3 1072.1,498.6 1074.1,498.0 1076.1,497.6 1078.1,497.2 1080.1,496.8 1082.1,496.3 1084.1,495.5 1086.1,494.3 1088.1,493.0 1090.1,491.7 1092.1,490.9 1094.1,490.7 1096.1,490.7 1098.1,490.7 1100.1,490.7 1102.1,490.7 1104.1,490.7 1106.1,490.7 1108.1,490.7 1110.1,490.8 1112.1,491.2 1114.1,491.6 1116.1,492.0 1118.1,492.2 1120.1,491.9 1122.1,490.8 1124.1,489.2 1126.1,487.6 1128.1,486.2 1130.1,485.6 1132.1,485.8 1134.1,486.3 1136.1,486.8 1138.1,487.0 1140.1,486.0 1142.1,484.3 1144.1,482.9 1146.1,482.6 1148.1,482.6 1150.1,482.6 1152.1,482.6 1154.1,482.7 1156.1,483.0 1158.1,483.6 1160.1,484.4 1162.1,485.2 1164.1,486.2 1166.1,487.5 1168.1,489.4 1170.1,491.5 1172.1,493.2 1174.1,493.9 1176.1,494.2 1178.1,494.5 1180.1,494.8 1182.1,495.6 1184.1,496.6 1186.1,497.0 1188.1,496.7 1190.1,496.2 1192.1,495.3 1194.1,494.4 1196.1,492.6 1198.1,490.3 1200.1,487.5 1202.1,484.5 1204.1,481.1 1206.1,476.9 1208.1,472.6 1210.1,468.7 1212.1,464.9 1214.1,461.2 1216.1,457.8 1218.1,454.6 1220.1,451.5 1222.1,448.7 1224.1,446.2 1226.1,444.1 1228.1,442.3 1230.1,440.5 1232.1,438.8 1234.1,437.1 1236.1,435.1 1238.1,433.1 1240.1,431.2 1242.1,429.4 1244.1,428.0 1246.1,427.0 1248.1,426.0 1250.1,425.1 1252.1,424.3 1254.1,423.6 1256.1,423.0 1258.1,422.5 1260.1,422.3 1262.1,422.2 1264.1,422.3 1266.1,422.5 1268.1,422.8 1270.1,422.9 1272.1,423.0 1274.1,422.6 1276.1,421.6 1278.1,420.4 1280.1,419.1 1282.1,418.2 1284.1,417.8 1286.1,417.6 1288.1,417.5 1290.1,417.4 1292.1,417.3 1294.1,417.3 1296.1,417.2 1298.1,417.0 1300.1,416.8 1302.1,416.4 1304.1,415.9 1306.1,415.3 1308.1,414.7 1310.1,414.3 1312.1,414.0 1314.1,414.0 1316.1,414.3 1318.1,414.8 1320.1,415.4 1322.1,415.9 1324.1,416.2 1326.1,416.3 1328.1,416.1 1330.1,415.9 1332.1,415.5 1334.1,415.0 1336.1,414.5 1338.1,413.9 1340.1,413.3 1342.1,412.4 1344.1,411.3 1346.1,410.0 1348.1,408.5 1350.1,406.9 1352.1,405.3 1354.1,403.6 1356.1,401.6 1358.1,399.5 1360.1,397.5 1362.1,395.7 1364.1,394.1 1366.1,392.7 1368.1,391.5 1370.1,390.2 1372.1,388.9 1374.1,387.4 1376.1,385.8 1378.1,383.7 1380.1,381.1 1382.1,377.8 1384.1,374.4 1386.1,371.0 1388.1,367.9 1390.1,365.0 1392.1,362.0 1394.1,358.4 1396.1,354.1 1398.1,349.5 1400.1,344.6 1402.1,339.1 1404.1,333.5 1406.1,328.2 1408.1,323.1 1410.1,319.5 1412.1,316.8 1414.1,315.1 1414.3,315.0" stroke="#00bcd4" stroke-width="1.8"/>
<polyline points="4.1,730.4 6.7,728.9 13.6,739.3 16.3,729.6 18.0,728.9 20.7,734.0 23.7,722.2 27.4,739.6 30.4,731.0 39.3,674.0 43.7,693.3 45.9,684.4 48.6,706.7 51.1,686.0 54.0,680.7 55.6,683.7 57.8,676.3 60.0,679.3 62.2,678.5 65.2,684.0 67.9,684.0 72.6,662.0 74.8,657.0 76.3,656.3 78.5,647.4 81.5,664.4 83.3,661.5 85.6,676.3 91.9,640.7 94.8,637.0 97.0,629.6 99.0,606.0 99.6,603.0 102.2,605.6 104.1,577.4 106.4,587.0 108.1,581.9 109.6,580.4 111.4,585.6 113.3,567.0 115.6,579.6 118.5,598.0 122.2,555.2 125.2,554.4 127.4,540.4 129.6,536.7 134.8,537.4 136.3,548.5 141.5,536.7 143.7,534.4 145.9,524.0 148.4,497.4 150.4,510.7 153.3,507.0 155.6,514.4 157.0,537.4 160.7,545.6 162.7,561.9 165.2,560.4 167.7,555.2 168.9,519.6 171.9,522.6 174.8,547.0 176.6,575.2 178.5,558.1 181.5,568.5 183.7,587.0 190.4,615.9 192.1,604.0 194.8,608.5 196.7,606.3 199.3,612.2 202.2,615.9 205.9,594.4 213.3,488.5 214.8,501.9 217.8,495.2 220.4,483.3 223.0,496.0 225.9,501.9 227.4,522.6 229.6,533.0 232.6,539.6 234.8,551.5 236.6,571.5 239.3,523.3 241.5,527.0 243.3,523.3 245.9,531.5 248.1,530.0 250.4,538.9 253.3,542.6 255.6,534.4 257.8,547.8 260.4,542.6 263.7,582.6 267.4,595.2 269.6,577.4 271.4,598.9 274.0,586.3 276.3,587.8 279.3,600.4 281.8,608.5 284.4,588.5 285.6,593.7 289.6,581.0 292.6,558.9 294.8,554.4 297.8,560.4 299.3,598.9 301.5,585.6 304.4,598.9 307.4,598.9 309.3,582.6 311.9,597.4 314.8,587.0 318.1,550.4 322.2,574.0 325.2,558.5 327.4,576.3 329.6,577.8 332.3,565.2 334.4,563.7 336.3,573.3 339.3,561.5 341.5,569.6 348.1,563.7 350.4,565.9 353.3,562.2 355.1,564.4 357.5,552.6 360.0,554.0 362.5,561.5 364.4,552.6 367.4,548.0 371.9,544.4 374.0,544.4 377.0,534.0 379.3,521.5 381.2,491.9 383.0,500.0 385.6,471.9 387.4,489.6 390.4,460.0 392.1,463.0 394.8,446.7 397.8,434.0 399.6,396.3 401.5,428.9 404.7,431.9 406.7,418.5 408.4,437.0 411.1,351.9 412.1,351.9 413.6,391.1 415.6,374.8 416.6,428.9 417.8,500.0 418.2,542.2 419.3,557.0 422.2,580.0 424.9,570.4 427.4,579.3 432.9,612.6 434.8,613.3 439.3,648.9 443.0,636.3 447.4,645.2 453.3,678.5 460.4,649.6 464.4,662.2 467.4,662.2 471.4,677.0 474.0,665.2 476.3,660.7 478.5,647.4 480.7,646.0 483.7,634.0 485.9,620.0 488.1,634.8 490.7,636.3 492.6,618.5 494.8,613.3 497.8,619.3 500.4,621.5 503.0,597.0 504.4,588.9 506.7,594.8 508.9,594.0 511.9,604.4 515.6,632.6 518.5,614.8 520.7,586.7 522.2,560.0 523.0,540.0 525.2,485.2 526.7,501.5 528.9,489.6 534.4,517.8 536.3,497.0 541.8,522.2 543.7,513.3 546.2,523.0 548.1,520.0 550.7,519.3 555.6,482.2 557.5,473.3 559.3,492.6 563.0,489.6 569.6,431.0 571.4,435.6 572.9,398.5 576.3,417.0 578.5,438.5 580.3,407.4 585.6,448.9 587.7,432.6 590.4,440.7 594.8,426.7 597.0,430.4 599.6,413.3 603.7,405.2 606.4,429.6 608.9,425.2 611.4,428.9 613.3,406.0 615.6,437.0 618.5,405.2 621.5,380.0 623.1,363.0 625.0,292.6 627.4,242.6 629.6,225.0 631.7,180.0 634.8,150.4 636.6,107.4 639.6,74.8 641.5,102.2 643.4,103.0 645.9,114.8 648.4,124.4 650.4,103.7 653.3,123.7 655.6,144.4 657.8,145.9 659.7,130.4 662.7,163.7 664.7,154.0 666.7,197.8 672.1,208.1 673.3,153.3 678.5,112.6 680.4,104.4 683.4,132.6 685.9,136.3 687.9,118.5 690.4,157.8 692.9,178.5 694.8,160.7 697.8,184.4 698.1,200.0 700.0,222.2 702.8,246.3 707.0,279.6 708.3,217.6 711.1,232.4 713.3,261.1 715.2,239.8 718.5,298.1 720.4,305.6 722.2,344.4 725.9,374.0 732.4,301.9 734.6,340.7 738.9,279.6 743.5,245.4 745.7,277.8 748.1,252.8 749.6,309.3 750.9,338.9 756.1,372.2 757.4,352.8 759.6,400.0 760.7,424.4 762.2,460.0 764.1,457.0 767.1,470.4 769.6,461.5 771.6,467.4 772.6,540.0 773.3,554.8 777.0,567.4 779.0,586.7 780.7,660.0 782.2,643.0 785.5,608.1 787.4,612.6 790.4,645.9 791.9,631.1 794.4,627.4 797.8,643.0 801.5,664.4 805.9,651.9 811.1,666.7 813.3,666.7 815.6,640.0 818.1,652.6 820.0,645.9 825.2,642.2 827.7,635.6 829.6,645.9 832.3,650.0 835.6,650.0 838.5,641.5 841.5,637.0 845.6,631.1 847.7,634.0 850.0,628.1 852.6,615.6 855.6,610.0 857.8,610.4 859.6,618.5 862.2,620.0 864.4,640.0 866.4,634.0 869.6,640.7 871.9,642.2 874.0,626.7 876.3,604.4 878.5,605.2 880.7,626.7 883.0,634.0 885.9,648.9 887.1,644.4 892.6,657.0 895.6,640.7 898.5,626.7 901.5,630.4 904.0,632.6 906.7,622.2 909.6,619.3 913.3,617.0 915.6,600.0 917.0,608.1 920.0,596.3 923.0,592.6 925.2,594.0 929.6,608.9 931.1,603.7 934.8,608.9 938.5,621.5 942.2,603.0 948.1,561.5 950.4,543.7 952.6,565.9 955.6,560.7 957.8,541.5 959.3,559.3 962.2,555.6 964.4,554.8 966.7,536.3 968.9,547.4 971.1,548.1 973.3,551.9 976.3,549.6 979.0,529.6 983.7,576.3 987.4,520.0 988.1,511.5 990.8,490.7 992.3,418.9 994.8,449.3 997.8,474.4 1000.7,398.9 1002.2,398.9 1004.4,438.9 1006.7,487.0 1008.1,482.6 1010.7,504.0 1014.1,487.8 1017.5,443.3 1020.7,470.0 1021.9,461.1 1024.4,465.6 1027.4,481.9 1030.4,504.0 1031.9,498.1 1034.8,516.7 1036.3,507.0 1038.5,538.1 1041.2,500.4 1043.7,501.1 1045.2,448.5 1048.1,459.6 1052.6,470.0 1055.6,459.6 1058.5,457.4 1063.0,463.3 1066.7,460.4 1069.6,439.6 1073.3,487.8 1076.3,485.6 1078.5,500.4 1085.9,462.6 1092.6,450.0 1097.0,478.9 1099.3,507.0 1101.5,481.9 1103.4,496.7 1106.7,467.8 1109.6,500.4 1113.3,490.7 1115.6,499.6 1117.5,515.9 1124.4,441.1 1127.4,443.3 1129.6,433.0 1131.9,487.8 1136.3,523.3 1138.5,459.6 1141.5,454.4 1143.4,412.2 1145.9,490.7 1148.4,470.0 1150.4,488.5 1152.6,458.1 1154.8,490.7 1157.8,521.9 1160.0,505.6 1163.0,502.6 1164.7,477.4 1166.7,545.6 1168.9,549.3 1173.3,515.9 1174.8,530.7 1180.7,507.0 1183.0,524.0 1189.6,477.4 1192.6,467.0 1193.3,460.0 1196.3,433.3 1199.3,427.4 1201.5,402.2 1206.7,362.2 1208.1,377.0 1211.1,362.2 1215.6,315.6 1218.5,354.8 1220.4,383.0 1222.2,352.6 1224.4,377.0 1227.4,368.1 1229.3,347.4 1231.9,381.5 1234.1,391.9 1236.3,413.3 1241.2,336.3 1243.7,350.4 1245.6,383.0 1248.9,387.4 1252.6,423.0 1256.3,418.5 1259.6,396.3 1262.2,402.2 1268.1,437.0 1271.4,424.4 1273.3,430.4 1276.3,406.7 1278.5,400.7 1280.3,344.4 1281.5,344.4 1283.0,383.0 1287.7,427.4 1289.6,395.6 1292.6,399.3 1294.1,430.4 1297.0,443.7 1299.3,394.8 1301.5,437.0 1303.4,409.6 1306.7,403.7 1308.9,402.2 1313.3,388.9 1315.6,396.3 1317.8,423.0 1322.2,457.0 1325.2,412.6 1327.4,409.6 1329.6,390.4 1333.3,403.7 1337.0,428.1 1339.3,387.4 1341.9,385.2 1343.7,407.4 1345.9,367.4 1350.4,363.0 1353.3,348.9 1360.0,336.3 1361.5,314.8 1364.4,351.1 1366.7,352.6 1368.9,334.0 1371.9,336.3 1373.3,345.2 1375.6,343.7 1378.5,310.0 1382.2,262.6 1385.2,277.4 1387.4,262.6 1389.6,292.2 1394.8,244.8 1397.8,198.9 1399.6,171.5 1401.5,195.9 1403.4,168.5 1405.9,168.5 1408.9,175.2 1410.4,200.4 1414.1,202.6" stroke="#ffffff" stroke-width="1.7" stroke-linejoin="round"/>
<line x1="4" y1="780.3" x2="1859" y2="70.1" stroke="#00e600" stroke-width="1"/>
<line x1="490" y1="810.0" x2="1859" y2="290.0" stroke="#00e600" stroke-width="1"/>
<line x1="4" y1="76.5" x2="1859" y2="76.5" stroke="#ffff00" stroke-width="1" stroke-dasharray="6 5"/>
<line x1="4" y1="168.5" x2="1859" y2="168.5" stroke="#ffff00" stroke-width="1" stroke-dasharray="6 5"/>
<line x1="4" y1="245.5" x2="1859" y2="245.5" stroke="#ffff00" stroke-width="1" stroke-dasharray="6 5"/>
</g>
<g clip-path="url(#cr)" fill="none">
<line x1="4" y1="832.5" x2="1859" y2="832.5" stroke="#ffff00" stroke-width="1" stroke-dasharray="6 5"/>
<line x1="4" y1="906.5" x2="1859" y2="906.5" stroke="#ffff00" stroke-width="1" stroke-dasharray="6 5"/>
<line x1="4" y1="968.5" x2="1859" y2="968.5" stroke="#ffff00" stroke-width="1" stroke-dasharray="6 5"/>
<polyline points="4.6,889.6 9.3,920.2 16.7,876.7 18.5,902.6 20.4,894.3 24.1,897.0 25.9,902.6 27.8,898.9 30.6,911.9 33.0,889.6 34.8,897.0 39.3,853.5 41.7,873.9 43.5,867.4 46.3,863.7 48.5,889.6 50.9,878.5 55.6,873.0 58.3,881.3 60.7,878.5 64.4,902.6 67.0,887.8 69.4,900.7 72.2,902.6 75.6,899.8 78.7,870.2 81.5,892.4 83.3,885.9 85.6,906.3 88.0,900.7 90.7,888.7 95.4,885.9 97.8,891.5 100.0,859.1 102.2,860.0 104.6,829.4 106.5,852.6 108.9,862.8 111.1,872.0 113.3,865.6 116.3,870.2 118.5,901.7 120.7,881.3 123.1,877.6 125.6,877.6 127.4,861.9 132.4,876.7 134.8,871.1 139.3,872.6 141.1,882.2 144.1,883.7 146.7,882.2 148.5,856.3 150.9,878.5 155.6,895.2 157.4,936.9 160.2,910.0 162.0,930.4 164.8,915.6 167.6,914.6 169.4,891.5 171.9,891.5 174.4,907.2 176.9,909.1 178.7,912.8 181.5,909.1 183.3,920.2 186.1,928.5 190.7,962.8 192.6,947.0 195.4,945.2 197.2,953.5 199.6,948.9 203.1,954.4 205.6,921.1 209.3,884.1 213.3,840.6 215.2,865.6 218.5,869.3 220.4,856.3 222.6,869.3 225.6,874.8 229.6,924.8 232.4,951.7 236.7,939.6 238.9,920.2 241.7,916.5 244.4,905.4 248.1,895.2 250.9,897.0 253.7,891.5 255.6,874.8 257.4,913.7 260.7,904.4 262.0,932.2 264.4,944.3 268.9,928.5 270.7,943.3 274.1,947.0 276.3,942.4 278.7,962.8 281.5,947.0 283.3,910.9 285.2,926.7 290.7,909.1 292.6,917.4 294.6,908.1 297.4,904.4 299.3,925.7 301.1,923.0 303.9,928.5 306.7,936.9 311.3,938.3 313.7,934.1 315.9,919.3 318.3,893.3 320.6,904.4 323.0,909.1 326.1,903.5 328.0,910.0 329.8,887.8 334.4,881.3 336.3,900.7 339.6,893.3 341.9,883.1 343.7,882.2 346.5,871.1 348.3,897.0 350.7,917.0 353.9,915.6 357.6,891.5 360.7,887.8 362.2,910.0 365.9,889.6 369.6,869.3 372.4,887.8 374.8,896.1 377.0,887.8 379.3,867.4 381.1,838.7 383.5,860.9 385.4,848.9 387.2,858.1 390.9,847.0 392.8,849.8 394.6,848.0 397.4,851.7 399.6,838.7 401.5,865.6 404.4,860.9 406.7,865.6 408.9,882.2 411.3,850.7 413.7,900.7 415.6,896.1 418.1,952.6 420.0,951.1 422.4,957.2 427.4,958.1 429.3,987.8 432.2,976.7 434.4,995.2 436.7,979.4 439.6,982.2 441.5,986.9 443.7,988.7 446.5,996.1 448.9,984.1 450.7,980.4 453.9,990.6 455.7,952.6 457.6,930.4 460.4,918.3 462.6,916.5 464.4,917.4 467.4,902.6 469.3,901.7 471.5,885.0 473.7,885.9 476.7,890.6 478.9,885.9 483.5,860.9 485.7,859.1 490.6,884.1 494.3,870.2 497.0,875.7 499.3,884.1 501.5,868.3 504.4,870.2 508.5,853.5 510.7,873.0 513.7,913.7 515.6,924.8 518.1,915.6 520.6,900.7 525.2,844.3 527.4,880.4 529.8,869.3 532.6,866.5 534.8,872.0 536.7,864.6 539.1,874.8 543.7,903.5 546.5,891.5 548.3,902.6 550.7,900.7 553.5,876.7 555.7,891.5 557.6,861.9 559.4,881.3 563.1,886.9 564.6,865.6 566.5,885.0 569.3,862.8 571.5,878.5 573.7,879.4 578.0,898.9 580.2,897.0 582.6,906.3 585.4,919.3 590.2,923.0 592.6,936.9 594.4,917.4 598.1,911.5 600.0,915.2 602.2,904.4 605.0,901.3 606.9,929.4 608.7,932.6 611.5,929.4 613.3,923.9 615.6,933.7 619.8,913.7 623.0,903.5 627.2,857.2 632.4,836.9 634.1,840.6 636.5,826.7 639.3,837.8 644.8,879.4 648.5,890.6 650.7,902.6 652.6,908.1 655.6,939.6 657.8,943.3 659.6,945.2 663.0,960.9 664.8,946.1 666.7,969.3 669.3,975.7 672.0,978.1 673.5,939.6 676.3,922.0 678.1,929.4 680.9,913.7 683.3,923.9 685.2,906.3 687.4,900.7 690.2,909.1 692.4,931.3 694.4,923.9 697.6,928.5 700.0,947.0 701.9,937.8 704.4,948.0 706.9,952.6 708.1,925.2 711.9,925.2 713.7,939.6 715.6,917.4 718.5,934.1 720.7,932.2 725.4,948.0 727.6,961.9 730.0,931.3 733.3,913.7 734.8,926.7 736.5,898.9 739.3,878.5 743.3,841.5 745.2,855.4 748.5,851.7 750.4,885.9 752.2,879.4 755.0,889.6 757.8,904.4 762.4,962.8 764.3,943.3 766.1,956.3 769.3,925.7 773.5,960.9 775.9,953.5 779.1,950.7 780.4,952.6 785.6,945.2 787.4,960.9 790.7,958.1 792.6,932.2 794.4,948.0 798.1,955.4 799.4,936.9 801.7,967.4 808.7,933.1 811.1,942.4 813.7,943.3 815.6,915.6 818.0,928.5 820.4,911.9 822.6,914.1 828.1,910.9 830.0,904.4 831.9,905.4 835.2,917.4 836.5,894.3 841.7,881.3 843.5,896.1 845.7,886.9 848.5,882.2 850.7,867.4 853.1,861.9 855.6,858.1 857.4,863.7 859.6,892.4 862.4,897.0 864.8,933.1 866.7,912.8 868.9,922.0 873.5,932.2 878.3,885.0 880.7,906.3 883.3,901.7 885.4,919.3 887.2,908.1 890.4,914.6 892.2,914.6 894.6,921.1 897.8,915.6 899.3,900.7 901.5,893.3 904.3,876.7 906.1,880.4 908.5,879.4 910.7,866.5 913.5,871.1 915.4,860.9 917.8,880.4 920.4,862.8 922.8,863.7 924.6,875.7 927.8,881.3 929.6,897.0 931.5,885.9 933.9,900.7 936.7,911.9 938.5,939.6 943.1,902.6 946.3,884.1 948.7,861.9 950.6,854.4 952.8,873.0 955.2,860.0 957.6,860.0 959.8,880.4 962.6,884.1 964.8,893.3 966.7,880.4 970.0,906.3 972.8,908.1 977.0,923.0 978.3,893.3 980.2,924.8 983.5,934.1 985.7,930.4 987.6,897.0 990.7,895.2 992.6,873.0 994.4,885.9 997.8,894.3 1001.5,863.7 1006.1,900.7 1010.4,923.0 1013.0,916.5 1015.9,905.4 1017.2,908.1 1020.4,926.7 1024.6,905.4 1027.4,906.3 1029.6,909.1 1032.0,909.1 1034.4,933.1 1036.7,930.4 1038.5,933.1 1043.1,908.1 1045.6,877.6 1048.1,876.7 1052.4,858.1 1055.6,850.7 1057.6,823.9 1059.8,837.8 1064.4,858.1 1066.7,856.3 1069.4,843.3 1071.9,871.1 1073.7,902.6 1076.5,913.7 1078.7,924.8 1080.7,900.7 1083.5,898.5 1085.7,901.7 1087.6,917.4 1092.2,874.8 1094.4,900.7 1096.3,892.4 1099.6,933.1 1101.9,915.6 1104.3,915.6 1106.7,908.1 1108.3,918.3 1114.4,899.8 1115.9,902.6 1118.1,890.6 1120.9,890.6 1122.8,873.9 1125.2,882.2 1130.2,882.2 1131.5,913.7 1134.4,916.5 1136.7,924.8 1138.5,904.4 1141.7,911.9 1143.5,898.9 1145.4,967.4 1149.6,960.0 1152.8,954.1 1155.7,956.3 1158.0,973.0 1159.8,967.4 1163.1,973.0 1164.4,907.2 1166.7,933.1 1169.4,935.6 1171.9,942.4 1173.7,927.6 1175.9,905.4 1180.6,904.4 1182.4,923.0 1185.2,878.5 1187.4,863.7 1189.8,858.1 1192.6,860.9 1194.4,846.1 1196.9,840.6 1199.6,847.0 1201.9,835.0 1203.7,835.9 1206.5,826.7 1208.9,848.9 1210.7,854.4 1213.3,841.5 1215.7,843.0 1218.1,867.4 1220.7,891.5 1222.2,879.4 1224.4,898.0 1226.9,889.6 1229.6,885.9 1231.5,915.6 1234.3,910.9 1236.7,924.8 1238.5,899.8 1241.7,900.7 1245.4,921.1 1248.1,923.0 1250.4,915.6 1252.8,946.1 1255.2,925.7 1257.4,941.5 1259.3,948.0 1261.1,944.3 1264.8,948.5 1267.6,948.0 1269.4,937.8 1271.9,922.0 1273.7,924.8 1276.3,908.1 1278.3,919.3 1280.2,879.4 1282.0,889.6 1285.2,890.6 1288.0,885.0 1289.8,883.1 1292.6,886.9 1294.4,900.7 1297.2,899.8 1299.6,892.4 1301.5,902.6 1303.3,889.6 1306.5,898.0 1308.7,911.9 1315.7,884.1 1317.6,917.4 1320.4,919.3 1322.6,940.6 1324.4,904.4 1327.4,894.3 1329.3,902.6 1331.1,900.7 1334.3,906.3 1336.7,906.3 1338.5,873.9 1341.7,876.7 1343.5,902.6 1345.9,883.1 1348.5,886.9 1350.4,866.5 1354.6,856.3 1357.4,876.7 1359.6,878.5 1361.5,864.6 1364.4,899.8 1368.5,910.9 1371.3,913.7 1375.6,930.4 1379.6,918.3 1382.4,903.5 1385.6,903.5 1389.8,914.6 1392.6,900.7 1396.3,880.4 1399.6,866.5 1401.5,873.0 1403.3,852.6 1406.5,868.3 1408.7,864.6 1410.6,885.9 1413.9,896.1" stroke="#f44336" stroke-width="1.8" stroke-linejoin="round"/>
</g>
<rect x="4" y="806" width="1912" height="1" fill="#ffffff"/>
<rect x="1859" y="1" width="1" height="1036" fill="#ffffff"/>
<rect x="4" y="1011" width="1912" height="1" fill="#ffffff"/>
<rect x="1860" y="2" width="4" height="1" fill="#ffffff"/>
<rect x="1860" y="36" width="4" height="1" fill="#ffffff"/>
<rect x="1860" y="105" width="4" height="1" fill="#ffffff"/>
<rect x="1860" y="139" width="4" height="1" fill="#ffffff"/>
<rect x="1860" y="173" width="4" height="1" fill="#ffffff"/>
<rect x="1860" y="207" width="4" height="1" fill="#ffffff"/>
<rect x="1860" y="275" width="4" height="1" fill="#ffffff"/>
<rect x="1860" y="310" width="4" height="1" fill="#ffffff"/>
<rect x="1860" y="344" width="4" height="1" fill="#ffffff"/>
<rect x="1860" y="412" width="4" height="1" fill="#ffffff"/>
<rect x="1860" y="446" width="4" height="1" fill="#ffffff"/>
<rect x="1860" y="480" width="4" height="1" fill="#ffffff"/>
<rect x="1860" y="514" width="4" height="1" fill="#ffffff"/>
<rect x="1860" y="548" width="4" height="1" fill="#ffffff"/>
<rect x="1860" y="583" width="4" height="1" fill="#ffffff"/>
<rect x="1860" y="617" width="4" height="1" fill="#ffffff"/>
<rect x="1860" y="651" width="4" height="1" fill="#ffffff"/>
<rect x="1860" y="685" width="4" height="1" fill="#ffffff"/>
<rect x="1860" y="719" width="4" height="1" fill="#ffffff"/>
<rect x="1860" y="753" width="4" height="1" fill="#ffffff"/>
<rect x="1860" y="788" width="4" height="1" fill="#ffffff"/>
<rect x="1860" y="816" width="4" height="1" fill="#ffffff"/>
<rect x="1860" y="847" width="4" height="1" fill="#ffffff"/>
<rect x="1860" y="877" width="4" height="1" fill="#ffffff"/>
<rect x="1860" y="938" width="4" height="1" fill="#ffffff"/>
<rect x="1860" y="999" width="4" height="1" fill="#ffffff"/>
<rect x="28" y="1012" width="1" height="4" fill="#ffffff"/>
<rect x="149" y="1012" width="1" height="4" fill="#ffffff"/>
<rect x="272" y="1012" width="1" height="4" fill="#ffffff"/>
<rect x="393" y="1012" width="1" height="4" fill="#ffffff"/>
<rect x="514" y="1012" width="1" height="4" fill="#ffffff"/>
<rect x="635" y="1012" width="1" height="4" fill="#ffffff"/>
<rect x="756" y="1012" width="1" height="4" fill="#ffffff"/>
<rect x="877" y="1012" width="1" height="4" fill="#ffffff"/>
<rect x="1000" y="1012" width="1" height="4" fill="#ffffff"/>
<rect x="1121" y="1012" width="1" height="4" fill="#ffffff"/>
<rect x="1242" y="1012" width="1" height="4" fill="#ffffff"/>
<rect x="1362" y="1012" width="1" height="4" fill="#ffffff"/>
<rect x="1483" y="1012" width="1" height="4" fill="#ffffff"/>
<rect x="1604" y="1012" width="1" height="4" fill="#ffffff"/>
<rect x="1727" y="1012" width="1" height="4" fill="#ffffff"/>
<rect x="1848" y="1012" width="1" height="4" fill="#ffffff"/>
</svg>
<div id="cv" style="position:absolute;left:0;top:0;width:1920px;height:1080px;will-change:transform">
<div class="pl" style="top:-3px">5600.00</div>
<div class="pl" style="top:31px">5400.00</div>
<div class="pl" style="top:100px">5000.00</div>
<div class="pl" style="top:134px">4800.00</div>
<div class="pl" style="top:168px">4600.00</div>
<div class="pl" style="top:202px">4400.00</div>
<div class="pl" style="top:270px">4000.00</div>
<div class="pl" style="top:305px">3800.00</div>
<div class="pl" style="top:339px">3600.00</div>
<div class="pl" style="top:407px">3200.00</div>
<div class="pl" style="top:441px">3000.00</div>
<div class="pl" style="top:475px">2800.00</div>
<div class="pl" style="top:509px">2600.00</div>
<div class="pl" style="top:543px">2400.00</div>
<div class="pl" style="top:578px">2200.00</div>
<div class="pl" style="top:612px">2000.00</div>
<div class="pl" style="top:646px">1800.00</div>
<div class="pl" style="top:680px">1600.00</div>
<div class="pl" style="top:714px">1400.00</div>
<div class="pl" style="top:748px">1200.00</div>
<div class="pl" style="top:783px">1000.00</div>
<div class="pl" style="top:811px">80.0000</div>
<div class="pl" style="top:842px">70.0000</div>
<div class="pl" style="top:872px">60.0000</div>
<div class="pl" style="top:933px">40.0000</div>
<div class="pl" style="top:994px">20.0000</div>
<div class="tag" style="top:68.0px;background:#ffff00;color:#000;"><i style="position:absolute;left:0;top:8px;width:4px;height:1px;background:#000"></i><span>5167.58</span></div>
<div class="tag" style="top:160.0px;background:#ffff00;color:#000;"><i style="position:absolute;left:0;top:8px;width:4px;height:1px;background:#000"></i><span>4630.39</span></div>
<div class="tag" style="top:237.0px;background:#ffff00;color:#000;"><i style="position:absolute;left:0;top:8px;width:4px;height:1px;background:#000"></i><span>4180.31</span></div>
<div class="tag" style="top:194.0px;background:#ffffff;color:#000;"><i style="position:absolute;left:0;top:8px;width:4px;height:1px;background:#000"></i><span>4429.00</span></div>
<div class="tag" style="top:370.0px;background:#4c525e;color:#ffffff;font-weight:bold;"><i style="position:absolute;left:0;top:8px;width:4px;height:1px;background:#ffffff"></i><span>3399.31</span></div>
<div class="tag" style="top:824.0px;background:#ffff00;color:#000;"><i style="position:absolute;left:0;top:8px;width:4px;height:1px;background:#000"></i><span>74.8345</span></div>
<div class="tag" style="top:898.0px;background:#ffff00;color:#000;"><i style="position:absolute;left:0;top:8px;width:4px;height:1px;background:#000"></i><span>50.5279</span></div>
<div class="tag" style="top:960.0px;background:#ffff00;color:#000;"><i style="position:absolute;left:0;top:8px;width:4px;height:1px;background:#000"></i><span>30.1608</span></div>
<div class="tl" style="left:28px">2011</div>
<div class="tl" style="left:149px">2012</div>
<div class="tl" style="left:272px">2013</div>
<div class="tl" style="left:393px">2014</div>
<div class="tl" style="left:514px">2015</div>
<div class="tl" style="left:635px">2016</div>
<div class="tl" style="left:756px">2017</div>
<div class="tl" style="left:877px">2018</div>
<div class="tl" style="left:1000px">2019</div>
<div class="tl" style="left:1121px">2020</div>
<div class="tl" style="left:1242px">2021</div>
<div class="tl" style="left:1362px">2022</div>
<div class="tl" style="left:1483px">2023</div>
<div class="tl" style="left:1604px">2024</div>
<div class="tl" style="left:1727px">2025</div>
<div class="tl" style="left:1848px">2026</div>
<div class="t" style="left:1860px;top:1012px;width:56px;height:25px;background:#000"></div>
<div class="t" style="left:165px;top:1012px;width:62px;height:22px;background:#4c525e;border-radius:0 0 2px 2px"></div>
<div class="t" style="left:165px;top:1017px;width:62px;text-align:center;font-size:10.5px;font-weight:bold;color:#fff;line-height:13px;letter-spacing:-0.1px">21 May '12</div>
</div>
<svg width="14" height="14" style="left:16px;top:13px" viewBox="0 0 14 14"><rect x="0.5" y="0.5" width="12" height="12" rx="1.5" fill="none" stroke="#787b86" stroke-width="1"/><path d="M6.5 2.5v8M2.5 6.5h8" stroke="#787b86" stroke-width="1" fill="none"/></svg>
<div class="t" style="left:39px;top:10px;font-size:15.5px;line-height:18px;color:#e8e8e8;letter-spacing:0.05px;-webkit-text-stroke:0.25px #e8e8e8">Cont, 1W, CJS</div>
<svg width="10" height="8" style="left:145px;top:16px" viewBox="0 0 10 8"><path d="M1.5 2.5l3 3l3-3" stroke="#d0d0d0" stroke-width="1.2" fill="none"/></svg>
<div class="t" style="left:180px;top:10px;font-size:15.5px;line-height:18px;color:#50535e">C</div>
<div class="t" style="left:190px;top:10px;font-size:15.5px;line-height:18px;color:#ffffff;letter-spacing:-0.1px;-webkit-text-stroke:0.25px #fff">2039.00</div>
<div class="t" style="left:256px;top:10px;font-size:15.5px;line-height:18px;color:#ffffff;letter-spacing:-0.1px;-webkit-text-stroke:0.25px #fff">&minus;39.00 (&minus;1.88%)</div>
<div class="t" style="left:901px;top:0;width:126px;height:17px;background:#909090;border-radius:0 0 4px 4px;border-top:1px solid #fff;box-sizing:border-box"></div>
<div class="t" style="left:906px;top:1px;font-size:11px;line-height:14px;color:#4a4d58">Exit Full Screen (ESC)</div>
<div class="t" style="left:1767px;top:16px;width:6px;height:6px;border-radius:50%;background:#8a8a8a"></div>
<div class="t" style="left:1777px;top:12px;font-size:11.8px;line-height:15px;color:#8a8a8a">Market Closed</div>
<div class="t" style="left:1614px;top:34px;-webkit-text-stroke:0.3px #fff;font-family:'DejaVu Sans','Liberation Sans',sans-serif;font-size:20px;letter-spacing:0.1px;font-weight:bold;font-style:italic;line-height:26px;color:#fff">CJS Securities</div>
<svg width="32" height="14" style="left:1816px;top:38px" viewBox="0 0 32 14"><rect x="0" y="0" width="14" height="14" rx="2" fill="#50535e"/><rect x="17" y="0" width="14" height="14" rx="2" fill="#50535e"/><path d="M3 5h8l-4 5z" fill="#000"/><path d="M20 6l4-4l4 4zM20 8l4 4l4-4z" fill="#000"/></svg>
<svg width="34" height="34" style="left:12px;top:964px" viewBox="0 0 34 34"><circle cx="16.7" cy="16.9" r="16" fill="#2f3241"/><path d="M8 23.2C6.5 23.2 5.7 22 5.7 20V17.5C5.7 15.5 7.5 14.3 9.5 14.5C10 11.5 12.3 9.8 14.8 9.8C17.3 9.8 19.2 11.3 20 13.8C21 13.2 23 13.2 24.6 14.4C26.6 16 27.5 18 27.5 20.5C27.5 22.2 26.8 23.2 25.5 23.2Z" fill="#38a5ef"/><path d="M5.5 20.6L13.6 14.8L19 19.8L24.8 13.8" stroke="#2f3241" stroke-width="1.3" fill="none"/><circle cx="13.6" cy="14.8" r="1.3" fill="#2f3241"/><circle cx="19" cy="19.9" r="1.3" fill="#2f3241"/></svg>
<svg width="20" height="20" style="left:1878px;top:1016px" viewBox="0 0 20 20"><g stroke="#787b86" stroke-width="1" fill="none"><circle cx="9.5" cy="9.5" r="4.7"/><path d="M9.5 2v2.5M9.5 14.5v2.5M2 9.5h2.5M14.5 9.5h2.5M4.2 4.2l1.8 1.8M13 13l1.8 1.8M14.8 4.2l-1.8 1.8M6 13l-1.8 1.8"/></g></svg>
<div class="t" style="left:20px;top:1048px;font-size:13.4px;line-height:18px;color:#131722">Date Range</div>
<svg width="10" height="8" style="left:96.5px;top:1053px" viewBox="0 0 10 8"><path d="M1.5 2.5l3 3l3-3" stroke="#50535e" stroke-width="1.1" fill="none"/></svg>
<div class="t" style="left:1689.5px;top:1048px;font-size:13.6px;line-height:18px;color:#131722">10:48:46 (UTC)</div>
<div class="t" style="left:1799px;top:1047px;width:1px;height:21px;background:#e0e3eb"></div>
<div class="t" style="left:1817px;top:1048px;font-size:14px;line-height:18px;color:#131722">%</div>
<div class="t" style="left:1844px;top:1048px;font-size:14px;line-height:18px;color:#131722">log</div>
<div class="t" style="left:1877px;top:1048px;font-size:14px;line-height:18px;color:#2196f3">auto</div>
</body></html>
